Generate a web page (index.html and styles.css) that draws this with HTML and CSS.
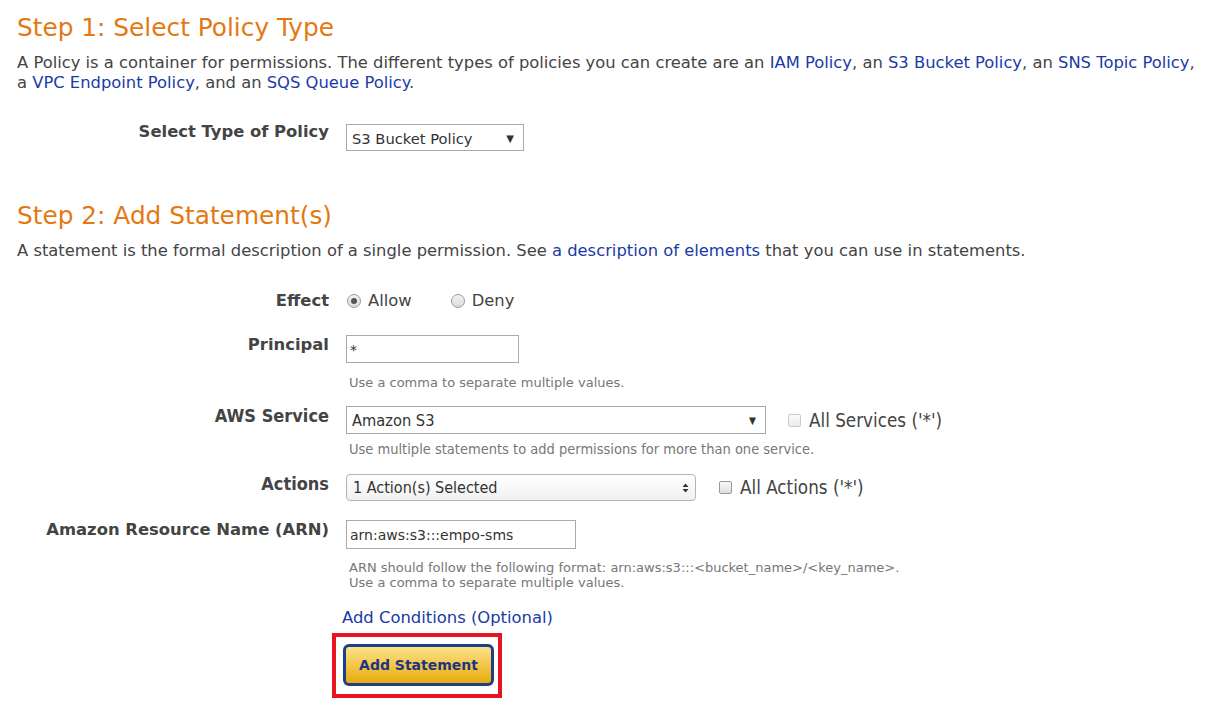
FILE: index.html
```html
<!DOCTYPE html>
<html>
<head>
<meta charset="utf-8">
<link rel="stylesheet" href="styles.css">
</head>
<body>
<div class="page">
  <h2 class="step">Step 1: Select Policy Type</h2>
  <p class="desc">A Policy is a container for permissions. The different types of policies you can create are an <a href="#">IAM Policy</a>, an <a href="#">S3 Bucket Policy</a>, an <a href="#">SNS Topic Policy</a>, a <a href="#">VPC Endpoint Policy</a>, and an <a href="#">SQS Queue Policy</a>.</p>

  <div class="form form-type">
    <div class="row">
      <div class="label">Select Type of Policy</div>
      <div class="ctrl">
        <div class="select sel-type"><span>S3 Bucket Policy</span><span class="arrow">▼</span></div>
      </div>
    </div>
  </div>

  <h2 class="step step2">Step 2: Add Statement(s)</h2>
  <p class="desc">A statement is the formal description of a single permission. See <a href="#">a description of elements</a> that you can use in statements.</p>

  <div class="form">
    <div class="row row-effect">
      <div class="label">Effect</div>
      <div class="ctrl radios">
        <label class="radio-opt"><span class="radio checked"></span>Allow</label>
        <label class="radio-opt"><span class="radio"></span>Deny</label>
      </div>
    </div>

    <div class="row row-principal">
      <div class="label">Principal</div>
      <div class="ctrl">
        <div class="input in-principal">*</div>
        <div class="hint">Use a comma to separate multiple values.</div>
      </div>
    </div>

    <div class="row row-service narrow">
      <div class="label">AWS Service</div>
      <div class="ctrl">
        <div class="line">
          <div class="select sel-service"><span>Amazon S3</span><span class="arrow">▼</span></div>
          <label class="check-opt"><span class="check light"></span>All Services ('*')</label>
        </div>
        <div class="hint">Use multiple statements to add permissions for more than one service.</div>
      </div>
    </div>

    <div class="row row-actions narrow">
      <div class="label">Actions</div>
      <div class="ctrl">
        <div class="line">
          <div class="select sel-actions"><span>1 Action(s) Selected</span><span class="updown"><svg width="7" height="10" viewBox="0 0 7 10"><path d="M3.5 0.5 L6.5 4 L0.5 4 Z M3.5 9.5 L6.5 6 L0.5 6 Z" fill="#333"/></svg></span></div>
          <label class="check-opt"><span class="check"></span>All Actions ('*')</label>
        </div>
      </div>
    </div>

    <div class="row row-arn">
      <div class="label">Amazon Resource Name (ARN)</div>
      <div class="ctrl">
        <div class="input in-arn">arn:aws:s3:::empo-sms</div>
        <div class="hint">ARN should follow the following format: arn:aws:s3:::&lt;bucket_name&gt;/&lt;key_name&gt;.<br>Use a comma to separate multiple values.</div>
      </div>
    </div>

    <div class="row row-cond">
      <div class="label"></div>
      <div class="ctrl">
        <a href="#" class="cond">Add Conditions (Optional)</a>
        <div class="highlight"><button class="btn">Add Statement</button></div>
      </div>
    </div>
  </div>
</div>
</body>
</html>
```

FILE: styles.css
```css
html, body {
  margin: 0;
  padding: 0;
  background: #fff;
}
body {
  font-family: "DejaVu Sans", Verdana, sans-serif;
  color: #444;
  font-size: 16.35px;
}
.page {
  padding: 12px 8px 0 17px;
}
a {
  color: #1a3aa8;
  text-decoration: none;
}
.step {
  margin: 0;
  font-weight: normal;
  font-size: 24.8px;
  line-height: 32px;
  color: #e47911;
}
.step2 {
  margin-top: 49px;
}
.desc {
  margin: 9px 0 0 0;
  font-size: 16.35px;
  line-height: 20px;
}
.form {
  display: flex;
  flex-direction: column;
}
.form-type {
  margin-top: 31px;
}
.row {
  display: grid;
  grid-template-columns: 312px 1fr;
  column-gap: 17px;
  align-items: start;
}
.label {
  text-align: right;
  font-weight: bold;
  font-size: 16.4px;
  color: #444;
  line-height: 20px;
}
.form-type .label {
  margin-top: -2px;
}
.select {
  box-sizing: border-box;
  border: 1px solid #a9a9a9;
  background: #fff;
  height: 28px;
  display: flex;
  align-items: center;
  justify-content: space-between;
  padding: 1px 9px 0 5px;
  font-size: 14.7px;
  color: #333;
}
.select .arrow {
  font-size: 10px;
  color: #333;
}
.sel-type {
  width: 178px;
  height: 27px;
}
.row-effect {
  margin-top: 30px;
}
.radios {
  display: flex;
  gap: 38px;
}
.radio-opt {
  display: flex;
  align-items: center;
  gap: 3px;
  color: #444;
  line-height: 20px;
}
.radio {
  box-sizing: border-box;
  width: 14px;
  height: 14px;
  border-radius: 50%;
  border: 1px solid #999;
  background: linear-gradient(#f3f3f3, #dcdcdc);
  margin: 0 4px 0 1px;
  position: relative;
}
.radio.checked::after {
  content: "";
  position: absolute;
  left: 3px;
  top: 3px;
  width: 6px;
  height: 6px;
  border-radius: 50%;
  background: #555;
}
.row-principal {
  margin-top: 24px;
}
.input {
  box-sizing: border-box;
  border: 1px solid #a9a9a9;
  height: 28px;
  padding: 6px 3px 0 3px;
  font-size: 14px;
  color: #333;
}
.in-principal {
  width: 173px;
}
.hint {
  font-size: 13px;
  color: #777;
  margin: 12px 0 0 3px;
  line-height: 15px;
}
.narrow .label,
.narrow .select,
.narrow .check-opt,
.narrow .hint {
  font-family: "Liberation Sans Narrow", "DejaVu Sans Condensed", sans-serif;
  font-stretch: condensed;
}
.narrow .label {
  font-size: 18px;
}
.row-service {
  margin-top: 16px;
}
.line {
  display: flex;
  align-items: center;
}
.sel-service {
  width: 420px;
  font-size: 16.3px;
}
.check-opt {
  display: flex;
  align-items: center;
  margin-left: 22px;
  font-size: 18.7px;
  color: #444;
}
.check {
  box-sizing: border-box;
  width: 13px;
  height: 13px;
  border: 1px solid #999;
  border-radius: 2px;
  background: linear-gradient(#f8f8f8, #dedede);
  margin-right: 8px;
}
.check.light {
  border-color: #ccc;
  background: linear-gradient(#fbfbfb, #ececec);
}
.row-service .hint {
  font-size: 14.5px;
  margin-top: 8px;
}
.row-actions {
  margin-top: 17px;
}
.sel-actions {
  width: 350px;
  height: 27px;
  border-radius: 4px;
  border-color: #b5b5b5;
  background: linear-gradient(#fff, #f1f1f1);
  font-size: 16px;
  padding: 0 6px 0 6px;
}
.updown {
  display: flex;
  align-items: center;
}
.row-actions .check-opt {
  margin-left: 23px;
}
.row-arn {
  margin-top: 19px;
}
.in-arn {
  width: 230px;
  height: 29px;
}
.row-arn .hint {
  margin-top: 11px;
}
.row-cond {
  margin-top: 18px;
}
.cond {
  display: block;
  margin-left: -4px;
  font-size: 16.4px;
  line-height: 20px;
}
.highlight {
  box-sizing: border-box;
  width: 170px;
  height: 65px;
  border: 4px solid #e8141f;
  margin: 5px 0 0 -14px;
  padding: 7px 0 0 7px;
}
.btn {
  box-sizing: border-box;
  width: 151px;
  height: 42px;
  border: 3px solid #1d3f8a;
  border-radius: 6px;
  background: linear-gradient(#fde189, #e8ac0c);
  color: #1f3480;
  font-family: "DejaVu Sans", Verdana, sans-serif;
  font-weight: bold;
  font-size: 14px;
  padding: 0;
}
```
